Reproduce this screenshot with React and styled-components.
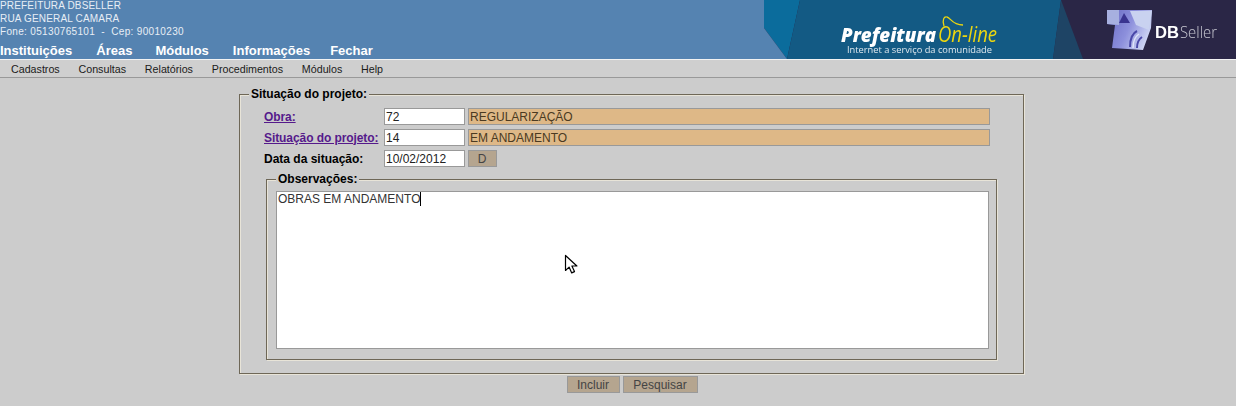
import React from "react";
import styled, { createGlobalStyle } from "styled-components";

const Global = createGlobalStyle`
  html, body { margin: 0; padding: 0; background: #cccccc; height: 406px; overflow: hidden; }
  body { font-family: "Liberation Sans", Arial, sans-serif; font-size: 12px; color: #000; }
`;

const Top = styled.header`
  height: 59px;
  background: #5583b1;
  display: flex;
  justify-content: space-between;
  border-bottom: 1px solid #f2f2f2;
`;
const TopLeft = styled.div`
  display: flex;
  flex-direction: column;
  color: #fff;
`;
const Address = styled.div`
  font-size: 10px;
  letter-spacing: ${(p) => (p.$tight ? "0.17px" : "0.33px")};
  line-height: 13px;
  height: 13px;
  color: #e8eef5;
  white-space: pre;
  margin-top: ${(p) => (p.$first ? "-1px" : "0")};
`;
const MainNav = styled.nav`
  display: flex;
  margin-top: 6px;
  font-size: 13px;
  font-weight: bold;
  line-height: 14px;
`;
const NavItem = styled.span`
  margin-right: ${(p) => p.$gap}px;
`;
const Banner = styled.svg`
  display: block;
  width: 472px;
  height: 59px;
  flex: none;
`;
const Menu = styled.nav`
  height: 17px;
  background: #cfcfcf;
  border-bottom: 1px solid #999;
  display: flex;
  gap: 18.8px;
  padding-left: 11px;
  align-items: center;
  font-size: 10.7px;
  color: #1a1a1a;
`;
const Fieldset = styled.fieldset`
  margin: 0;
  min-width: 0;
  box-sizing: border-box;
  border: 1px solid #6e6757;
  box-shadow: inset 1px 1px 0 #e8e4d8, 1px 1px 0 #e8e4d8;
`;
const Legend = styled.legend`
  font-weight: bold;
  font-size: 12px;
  line-height: 14px;
  padding: 0 2px;
  background: #cccccc;
  margin-left: ${(p) => p.$left}px;
`;
const OuterField = styled(Fieldset)`
  width: 785px;
  height: 287px;
  margin: 9px 0 0 239px;
  padding: 7px 0 0 24px;
`;
const Row = styled.div`
  display: flex;
  height: 17px;
  margin-bottom: 4px;
  align-items: center;
`;
const LinkLabel = styled.a`
  width: 120px;
  font-weight: bold;
  color: #551a8b;
  text-decoration: underline;
  letter-spacing: -0.08px;
  flex: none;
`;
const Label = styled.span`
  width: 120px;
  font-weight: bold;
  flex: none;
`;
const Input = styled.input`
  box-sizing: border-box;
  height: 17px;
  width: ${(p) => p.$w}px;
  margin-right: 3px;
  padding: 0 1px;
  border: 1px solid #999;
  background: ${(p) => (p.$ro ? "#deb887" : "#fff")};
  color: ${(p) => (p.$ro ? "#4a3a22" : "#222")};
  font: 12px "Liberation Sans", Arial, sans-serif;
  outline: none;
`;
const Button = styled.button`
  box-sizing: border-box;
  height: 17px;
  width: ${(p) => p.$w}px;
  padding: 0 1px 0 0;
  border: 1px solid #999;
  background: #b5a58f;
  color: #444;
  font: 12px "Liberation Sans", Arial, sans-serif;
`;
const InnerField = styled(Fieldset)`
  width: 731px;
  height: 188px;
  margin: 5px 0 0 2px;
  padding: 5px 0 0 9px;
`;
const TextBox = styled.div`
  box-sizing: border-box;
  width: 713px;
  height: 158px;
  background: #fff;
  border: 1px solid #999;
  padding: 0 1px;
  font-size: 12px;
  line-height: 14px;
  color: #333;
`;
const Caret = styled.span`
  display: inline-block;
  width: 1px;
  height: 14px;
  background: #000;
  vertical-align: top;
`;
const Actions = styled.div`
  display: flex;
  gap: 3px;
  margin: 2px 0 0 567px;
`;
const Pointer = styled.svg`
  position: absolute;
  left: 564px;
  top: 254px;
  width: 15px;
  height: 21px;
`;
const Blurred = styled.g`
  filter: blur(0.35px);
`;

export default function App() {
  return (
    <>
      <Global />
      <Top>
        <TopLeft>
          <Address $first $tight>PREFEITURA DBSELLER</Address>
          <Address $tight>RUA GENERAL CAMARA</Address>
          <Address>{"Fone: 05130765101  -  Cep: 90010230"}</Address>
          <MainNav>
            <NavItem $gap={24}>Instituições</NavItem>
            <NavItem $gap={23}>Áreas</NavItem>
            <NavItem $gap={24}>Módulos</NavItem>
            <NavItem $gap={20}>Informações</NavItem>
            <NavItem $gap={0}>Fechar</NavItem>
          </MainNav>
        </TopLeft>
        <Banner viewBox="0 0 472 59">
          <defs>
            <linearGradient id="mark" x1="0" y1="0.2" x2="1" y2="0.6">
              <stop offset="0" stopColor="#6a6cc4" />
              <stop offset="0.5" stopColor="#8d90dc" />
              <stop offset="1" stopColor="#d3dbf6" />
            </linearGradient>
          </defs>
          <rect width="472" height="59" fill="#2a2646" />
          <polygon points="0,0 36,0 23,59 0,28" fill="#0b6c9c" />
          <polygon points="0,28 23,59 0,59" fill="#5583b1" />
          <polygon points="36,0 297,0 289,59 23,59" fill="#135a84" />
          <polygon points="297,0 319,59 289,59" fill="#1e4465" />
          <Blurred>
            <text x="77" y="42" fontFamily="'Open Sans', sans-serif" fontSize="20" fontWeight="800" fontStyle="italic" fill="#fff" textLength="95" lengthAdjust="spacingAndGlyphs">Prefeitura</text>
            <text x="174" y="42" fontFamily="'Open Sans', sans-serif" fontSize="21" fontStyle="italic" fill="#ecd60f" textLength="59" lengthAdjust="spacingAndGlyphs">On-line</text>
            <path d="M180 26C178 20 180 16 183 17C187 18 188 25 199 25" fill="none" stroke="#ecd60f" strokeWidth="1.3" />
            <text x="83" y="53" fontFamily="'Open Sans', sans-serif" fontSize="9.5" fill="#dfe8ee" textLength="145" lengthAdjust="spacingAndGlyphs">Internet a serviço da comunidade</text>
            <polygon points="343,10 388,10 387,28 379,50 348,48 351,25 343,24" fill="url(#mark)" />
            <polygon points="343,10 355,10 355,25 343,24" fill="#a7b0e0" />
            <polygon points="360,13 366,23 355,23" fill="#3a3490" />
            <polygon points="366,11 388,11 385,30 372,25" fill="#c9d2f0" />
            <path d="M366 47c0-8 3-14 7-16M373 48c0-5 2-9 5-11" fill="none" stroke="#4a48a8" strokeWidth="2" />
            <path d="M369 48c0-7 3-12 6-14" fill="none" stroke="#dfe5f8" strokeWidth="1.5" />
            <text x="391" y="38" fontFamily="'Liberation Sans', sans-serif" fontSize="16" fontWeight="bold" fill="#fff" textLength="24" lengthAdjust="spacingAndGlyphs">DB</text>
            <text x="416" y="38" fontFamily="'Open Sans', sans-serif" fontSize="16" fontWeight="300" fill="#c8c8d2" textLength="37" lengthAdjust="spacingAndGlyphs">Seller</text>
          </Blurred>
        </Banner>
      </Top>
      <Menu>
        <span>Cadastros</span>
        <span>Consultas</span>
        <span>Relatórios</span>
        <span>Procedimentos</span>
        <span>Módulos</span>
        <span>Help</span>
      </Menu>
      <main>
        <OuterField>
          <Legend $left={-15}>Situação do projeto:</Legend>
          <Row>
            <LinkLabel>Obra:</LinkLabel>
            <Input $w={81} defaultValue="72" />
            <Input $w={522} $ro readOnly defaultValue="REGULARIZAÇÃO" />
          </Row>
          <Row>
            <LinkLabel>Situação do projeto:</LinkLabel>
            <Input $w={81} defaultValue="14" />
            <Input $w={522} $ro readOnly defaultValue="EM ANDAMENTO" />
          </Row>
          <Row>
            <Label>Data da situação:</Label>
            <Input $w={81} defaultValue="10/02/2012" />
            <Button $w={29}>D</Button>
          </Row>
          <InnerField>
            <Legend $left={0}>Observações:</Legend>
            <TextBox>OBRAS EM ANDAMENTO<Caret /></TextBox>
          </InnerField>
        </OuterField>
        <Actions>
          <Button $w={53}>Incluir</Button>
          <Button $w={75}>Pesquisar</Button>
        </Actions>
      </main>
      <Pointer viewBox="0 0 15 21">
        <path d="M1.5 1.5v15l3.6-3.4 2.6 5.8 2.8-1.3-2.6-5.6h5z" fill="#fff" stroke="#000" strokeWidth="1.2" strokeLinejoin="round" />
      </Pointer>
    </>
  );
}
